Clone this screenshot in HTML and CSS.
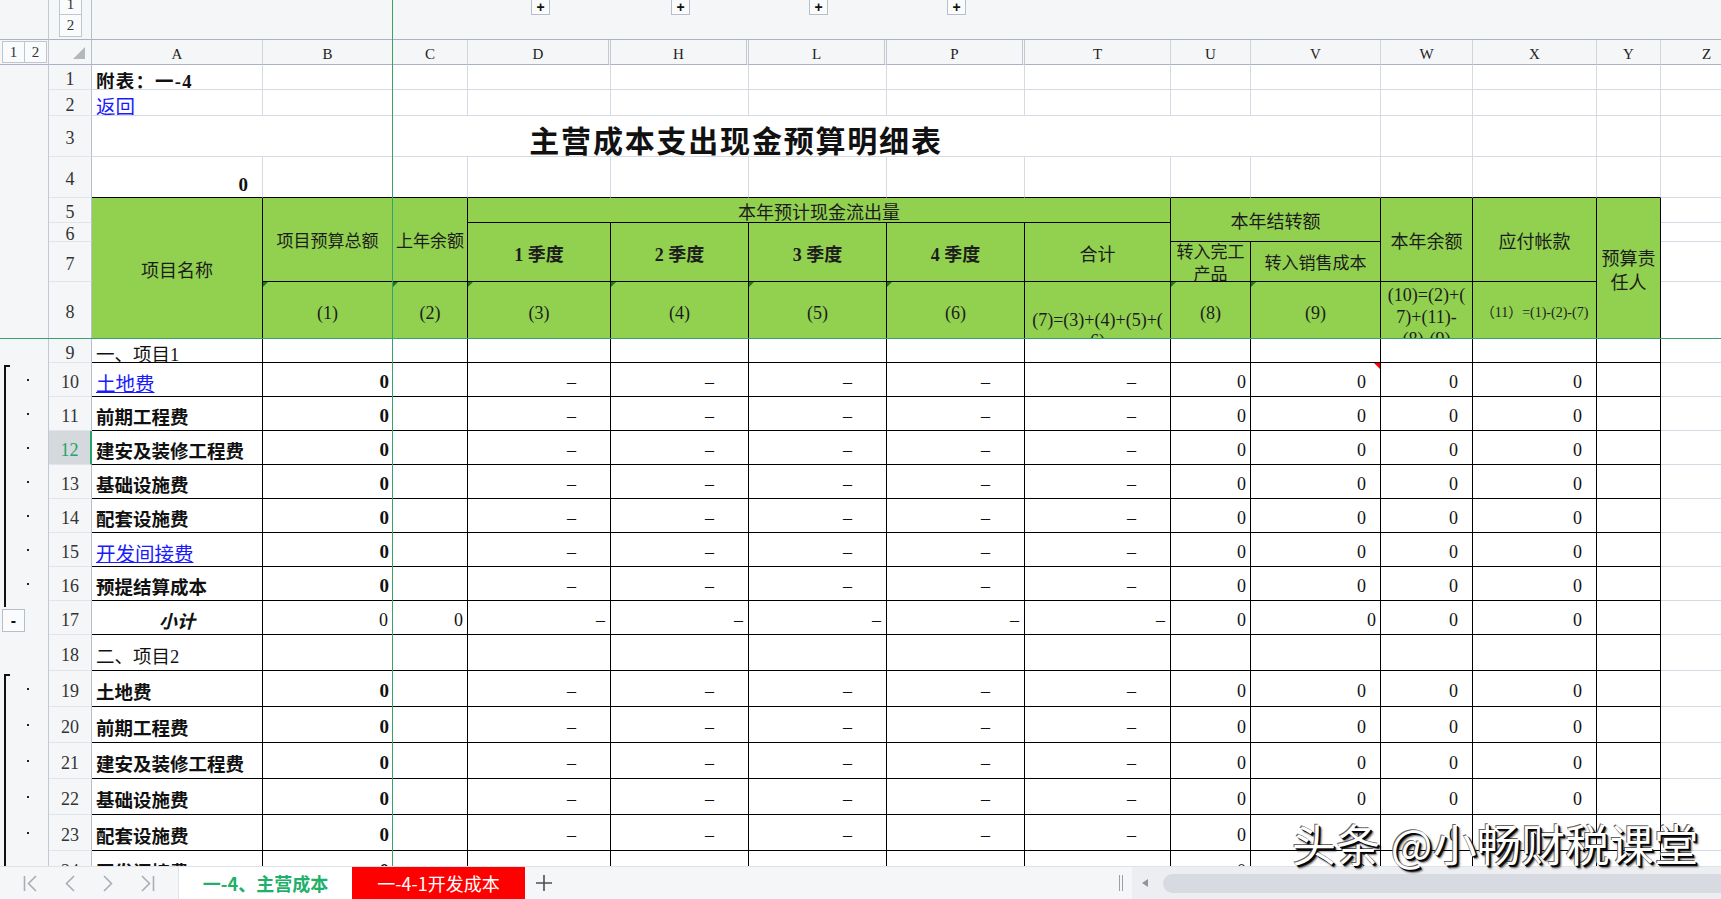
FILE: index.html
```html
<!DOCTYPE html>
<html lang="zh-CN">
<head>
<meta charset="utf-8">
<title>主营成本支出现金预算明细表</title>
<link rel="stylesheet" href="styles.css">
</head>
<body>
<div class="app">
  <div class="sheet">
    <div class="grid">
      <!-- outline bar -->
      <div class="o top"></div>
      <div class="topl"><span class="lb lb1">1</span><span class="lb lb2">2</span></div>
      <div class="topr"><span class="plus p1">+</span><span class="plus p2">+</span><span class="plus">+</span><span class="plus">+</span></div>
      <!-- column header -->
      <div class="o lv"><span class="lvl">1</span><span class="lvl lvl2">2</span></div>
      <div class="corner"><span class="tri"></span></div>
      <div class="ch">A</div><div class="ch">B</div><div class="ch">C</div><div class="ch hid">D</div><div class="ch hid">H</div><div class="ch hid">L</div><div class="ch hid">P</div><div class="ch">T</div><div class="ch">U</div><div class="ch">V</div><div class="ch">W</div><div class="ch">X</div><div class="ch">Y</div><div class="ch">Z</div>
      <!-- row 1 -->
      <div class="o"></div><div class="r">1</div>
      <div class="t ls">附表：一-4</div>
      <div></div><div></div><div></div><div></div><div></div><div></div><div></div><div></div><div></div><div></div><div></div><div></div><div></div>
      <!-- row 2 -->
      <div class="o"></div><div class="r">2</div>
      <div class="t tn"><a class="lk" href="#">返回</a></div>
      <div></div><div></div><div></div><div></div><div></div><div></div><div></div><div></div><div></div><div></div><div></div><div></div><div></div>
      <!-- row 3 -->
      <div class="o"></div><div class="r">3</div>
      <div class="title">主营成本支出现金预算明细表</div>
      <div></div><div></div><div></div><div></div>
      <!-- row 4 -->
      <div class="o"></div><div class="r">4</div>
      <div class="kb n b p14 bot">0</div>
      <div class="kb"></div><div class="kb"></div><div class="kb"></div><div class="kb"></div><div class="kb"></div><div class="kb"></div><div class="kb"></div><div class="kb"></div><div class="kb"></div><div class="kb"></div><div class="kb"></div><div class="kb"></div>
      <div></div>
      <!-- row 5 -->
      <div class="o"></div><div class="r">5</div>
      <div class="h s4r">项目名称</div>
      <div class="h s3r f17">项目预算总额</div>
      <div class="h s3r f17">上年余额</div>
      <div class="h s5c">本年预计现金流出量</div>
      <div class="h s2c s2r">本年结转额</div>
      <div class="h s3r">本年余额</div>
      <div class="h s3r">应付帐款</div>
      <div class="h s4r l24"><span>预算责<br>任人</span></div>
      <div></div>
      <!-- row 6 -->
      <div class="o"></div><div class="r">6</div>
      <div class="h s2r b">1 季度</div>
      <div class="h s2r b">2 季度</div>
      <div class="h s2r b">3 季度</div>
      <div class="h s2r b">4 季度</div>
      <div class="h s2r">合计</div>
      <div></div>
      <!-- row 7 -->
      <div class="o"></div><div class="r">7</div>
      <div class="h f17"><span>转入完工<br>产品</span></div>
      <div class="h f17">转入销售成本</div>
      <div></div>
      <!-- row 8 -->
      <div class="o"></div><div class="r">8</div>
      <div class="h tg">(1)</div>
      <div class="h tg">(2)</div>
      <div class="h tg">(3)</div>
      <div class="h tg">(4)</div>
      <div class="h tg">(5)</div>
      <div class="h tg">(6)</div>
      <div class="h t8"><span>(7)=(3)+(4)+(5)+(<br>6)</span></div>
      <div class="h tg">(8)</div>
      <div class="h tg">(9)</div>
      <div class="h w8"><span>(10)=(2)+(<br>7)+(11)-<br>(8)-(9)</span></div>
      <div class="h x8">（11）=(1)-(2)-(7)</div>
      <div></div>
      <!-- row 9 -->
      <div class="o"></div><div class="r">9</div>
      <div class="k t tn">一、项目1</div>
      <div class="k"></div><div class="k"></div><div class="k"></div><div class="k"></div><div class="k"></div><div class="k"></div><div class="k"></div><div class="k"></div><div class="k"></div><div class="k"></div><div class="k"></div><div class="k"></div>
      <div></div>
      <!-- row 10 -->
      <div class="og">
        <span class="bar"></span>
        <span class="dot"></span><span class="dot"></span><span class="dot"></span><span class="dot"></span><span class="dot"></span><span class="dot"></span><span class="dot"></span>
        <span class="mbtn">-</span>
      </div>
      <div class="r">10</div>
      <div class="k t"><a class="lk" href="#">土地费</a></div>
      <div class="k n nb">0</div><div class="k"></div>
      <div class="k d">–</div><div class="k d">–</div><div class="k d">–</div><div class="k d">–</div><div class="k d">–</div>
      <div class="k n">0</div><div class="k n p14 rt">0</div><div class="k n p14">0</div><div class="k n p14">0</div>
      <div class="k"></div><div></div>
      <!-- row 11 -->
      <div class="r">11</div>
      <div class="k t">前期工程费</div>
      <div class="k n nb">0</div><div class="k"></div>
      <div class="k d">–</div><div class="k d">–</div><div class="k d">–</div><div class="k d">–</div><div class="k d">–</div>
      <div class="k n">0</div><div class="k n p14">0</div><div class="k n p14">0</div><div class="k n p14">0</div>
      <div class="k"></div><div></div>
      <!-- row 12 -->
      <div class="r sel">12</div>
      <div class="k t">建安及装修工程费</div>
      <div class="k n nb">0</div><div class="k"></div>
      <div class="k d">–</div><div class="k d">–</div><div class="k d">–</div><div class="k d">–</div><div class="k d">–</div>
      <div class="k n">0</div><div class="k n p14">0</div><div class="k n p14">0</div><div class="k n p14">0</div>
      <div class="k"></div><div></div>
      <!-- row 13 -->
      <div class="r">13</div>
      <div class="k t">基础设施费</div>
      <div class="k n nb">0</div><div class="k"></div>
      <div class="k d">–</div><div class="k d">–</div><div class="k d">–</div><div class="k d">–</div><div class="k d">–</div>
      <div class="k n">0</div><div class="k n p14">0</div><div class="k n p14">0</div><div class="k n p14">0</div>
      <div class="k"></div><div></div>
      <!-- row 14 -->
      <div class="r">14</div>
      <div class="k t">配套设施费</div>
      <div class="k n nb">0</div><div class="k"></div>
      <div class="k d">–</div><div class="k d">–</div><div class="k d">–</div><div class="k d">–</div><div class="k d">–</div>
      <div class="k n">0</div><div class="k n p14">0</div><div class="k n p14">0</div><div class="k n p14">0</div>
      <div class="k"></div><div></div>
      <!-- row 15 -->
      <div class="r">15</div>
      <div class="k t"><a class="lk" href="#">开发间接费</a></div>
      <div class="k n nb">0</div><div class="k"></div>
      <div class="k d">–</div><div class="k d">–</div><div class="k d">–</div><div class="k d">–</div><div class="k d">–</div>
      <div class="k n">0</div><div class="k n p14">0</div><div class="k n p14">0</div><div class="k n p14">0</div>
      <div class="k"></div><div></div>
      <!-- row 16 -->
      <div class="r">16</div>
      <div class="k t">预提结算成本</div>
      <div class="k n nb">0</div><div class="k"></div>
      <div class="k d">–</div><div class="k d">–</div><div class="k d">–</div><div class="k d">–</div><div class="k d">–</div>
      <div class="k n">0</div><div class="k n p14">0</div><div class="k n p14">0</div><div class="k n p14">0</div>
      <div class="k"></div><div></div>
      <!-- row 17 -->
      <div class="r">17</div>
      <div class="k sub">小计</div>
      <div class="k n">0</div><div class="k n">0</div>
      <div class="k d0">–</div><div class="k d0">–</div><div class="k d0">–</div><div class="k d0">–</div><div class="k d0">–</div>
      <div class="k n">0</div><div class="k n">0</div><div class="k n p14">0</div><div class="k n p14">0</div>
      <div class="k"></div><div></div>
      <!-- row 18 -->
      <div class="o"></div><div class="r">18</div>
      <div class="k t tn">二、项目2</div>
      <div class="k"></div><div class="k"></div><div class="k"></div><div class="k"></div><div class="k"></div><div class="k"></div><div class="k"></div><div class="k"></div><div class="k"></div><div class="k"></div><div class="k"></div><div class="k"></div>
      <div></div>
      <!-- row 19 -->
      <div class="og og2">
        <span class="bar"></span>
        <span class="dot"></span><span class="dot"></span><span class="dot"></span><span class="dot"></span><span class="dot"></span><span class="dot"></span>
      </div>
      <div class="r">19</div>
      <div class="k t">土地费</div>
      <div class="k n nb">0</div><div class="k"></div>
      <div class="k d">–</div><div class="k d">–</div><div class="k d">–</div><div class="k d">–</div><div class="k d">–</div>
      <div class="k n">0</div><div class="k n p14">0</div><div class="k n p14">0</div><div class="k n p14">0</div>
      <div class="k"></div><div></div>
      <!-- row 20 -->
      <div class="r">20</div>
      <div class="k t">前期工程费</div>
      <div class="k n nb">0</div><div class="k"></div>
      <div class="k d">–</div><div class="k d">–</div><div class="k d">–</div><div class="k d">–</div><div class="k d">–</div>
      <div class="k n">0</div><div class="k n p14">0</div><div class="k n p14">0</div><div class="k n p14">0</div>
      <div class="k"></div><div></div>
      <!-- row 21 -->
      <div class="r">21</div>
      <div class="k t">建安及装修工程费</div>
      <div class="k n nb">0</div><div class="k"></div>
      <div class="k d">–</div><div class="k d">–</div><div class="k d">–</div><div class="k d">–</div><div class="k d">–</div>
      <div class="k n">0</div><div class="k n p14">0</div><div class="k n p14">0</div><div class="k n p14">0</div>
      <div class="k"></div><div></div>
      <!-- row 22 -->
      <div class="r">22</div>
      <div class="k t">基础设施费</div>
      <div class="k n nb">0</div><div class="k"></div>
      <div class="k d">–</div><div class="k d">–</div><div class="k d">–</div><div class="k d">–</div><div class="k d">–</div>
      <div class="k n">0</div><div class="k n p14">0</div><div class="k n p14">0</div><div class="k n p14">0</div>
      <div class="k"></div><div></div>
      <!-- row 23 -->
      <div class="r">23</div>
      <div class="k t">配套设施费</div>
      <div class="k n nb">0</div><div class="k"></div>
      <div class="k d">–</div><div class="k d">–</div><div class="k d">–</div><div class="k d">–</div><div class="k d">–</div>
      <div class="k n">0</div><div class="k n p14">0</div><div class="k n p14">0</div><div class="k n p14">0</div>
      <div class="k"></div><div></div>
      <!-- row 24 -->
      <div class="r">24</div>
      <div class="k t">开发间接费</div>
      <div class="k n nb">0</div><div class="k"></div>
      <div class="k d">–</div><div class="k d">–</div><div class="k d">–</div><div class="k d">–</div><div class="k d">–</div>
      <div class="k n">0</div><div class="k n p14">0</div><div class="k n p14">0</div><div class="k n p14">0</div>
      <div class="k"></div><div></div>
    </div>
    <div class="freeze-v"></div>
    <div class="freeze-h"></div>
  </div>
  <div class="tabs">
    <div class="nav">
      <span class="navi"><svg width="15" height="17" viewBox="0 0 15 17"><path d="M1.5 1v15M13 1L5.5 8.5 13 16" fill="none" stroke="#a9adb4" stroke-width="1.6"/></svg></span>
      <span class="navi"><svg width="11" height="17" viewBox="0 0 11 17"><path d="M10 1L2.5 8.5 10 16" fill="none" stroke="#a9adb4" stroke-width="1.6"/></svg></span>
      <span class="navi"><svg width="11" height="17" viewBox="0 0 11 17"><path d="M1 1L8.5 8.5 1 16" fill="none" stroke="#a9adb4" stroke-width="1.6"/></svg></span>
      <span class="navi"><svg width="15" height="17" viewBox="0 0 15 17"><path d="M2 1L9.5 8.5 2 16M13.5 1v15" fill="none" stroke="#a9adb4" stroke-width="1.6"/></svg></span>
    </div>
    <div class="tab on">一-4、主营成本</div>
    <div class="tab red">一-4-1开发成本</div>
    <div class="add"><svg width="18" height="18" viewBox="0 0 18 18"><path d="M9 1v16M1 9h16" fill="none" stroke="#4a4f57" stroke-width="1.6"/></svg></div>
    <div class="fill"></div>
    <div class="split"><span></span><span></span></div>
    <div class="track"><span class="arr"></span><span class="thumb"></span></div>
  </div>
  <div class="wm">头条 @小畅财税课堂</div>
</div>
</body>
</html>
```

FILE: styles.css
```css
*{box-sizing:border-box;margin:0;padding:0}
html,body{width:1721px;height:899px;overflow:hidden}
body{background:#fff;font-family:"Liberation Serif","Noto Sans CJK SC",serif;color:#111}
.app{position:relative;display:flex;flex-direction:column;height:899px;width:1721px;overflow:hidden}
.sheet{position:relative;flex:0 0 866px;overflow:hidden}
.grid{display:grid;grid-template-columns:49px 43px 171px 130px 75px 143px 138px 138px 138px 146px 80px 130px 92px 124px 64px 92px;grid-template-rows:40px 25px 25px 26px 41px 41px 25px 19px 40px 57px 24px repeat(8,34px) repeat(6,36px) 36px;width:1753px}
.grid>div{display:flex;align-items:center;min-width:0;overflow:hidden;white-space:nowrap;background:#fff;border-right:1px solid #d4d9e2;border-bottom:1px solid #d4d9e2;font-size:18px;padding-top:5px}

/* outline column + bars */
.grid>.o{background:#f5f6f8;border-right-color:#c3c9d4;border-bottom:0;padding-top:0}
.grid>.top{border-bottom:1px solid #aab2c4}
.grid>.topl{background:#f5f6f8;border-right-color:#b8bfcc;border-bottom-color:#aab2c4;flex-direction:column;align-items:flex-start;padding:0 0 0 10px}
.lb{display:flex;justify-content:center;width:23px;border:1px solid #c0c6d0;background:#fafbfc;font-size:15px;color:#333;line-height:1}
.lb1{height:15px;border-top:0;align-items:flex-end;padding-bottom:2px}
.lb2{height:22px;border-top:0;align-items:center}
.grid>.topr{grid-column:3 / -1;background:#f5f6f8;border-right:0;border-bottom-color:#aab2c4;align-items:flex-start;padding-top:0}
.plus{display:flex;align-items:center;justify-content:center;width:19px;height:15px;border:1px solid #b9bfca;border-top:0;background:#fafbfc;font:bold 14px "Liberation Sans",sans-serif;line-height:1;color:#111;margin-left:119px}
.p1{margin-left:439px}
.p2{margin-left:121px}

/* column header */
.grid>.lv{border-bottom:1px solid #aab2c4;align-items:flex-start;padding:1px 0 0 2px}
.lvl{display:flex;align-items:center;justify-content:center;width:23px;height:22px;border:1px solid #c0c6d0;background:#fafbfc;font-size:15px;color:#333}
.lvl2{width:22px;border-left:0}
.grid>.corner{background:#f5f6f8;border-right-color:#b8bfcc;border-bottom-color:#aab2c4;align-items:flex-end;justify-content:flex-end;padding:0 6px 5px 0}
.tri{width:0;height:0;border-left:12px solid transparent;border-bottom:12px solid #b4b7bc}
.grid>.ch{background:#f5f6f8;justify-content:center;font-size:15px;color:#222;border-right-color:#cfd4dd;border-bottom-color:#aab2c4}
.grid>.hid{border-right:3px double #c3c8d2}

/* row header */
.grid>.r{background:#f5f6f8;justify-content:center;color:#333;border-right-color:#b8bfcc;border-bottom-color:#e1e4ea;font-size:18px}
.grid>.r.sel{background:#d5d8dd;color:#22a567;border-right:2px solid #22a567}

/* borders */
.grid>.k{border-right-color:#000;border-bottom-color:#000}
.grid>.kb{border-bottom-color:#000}

/* header cells */
.grid>.h{position:relative;background:#92d050;border-right-color:#000;border-bottom-color:#000;justify-content:center;text-align:center;white-space:normal;color:#1c1c1c;line-height:22px}
.s4r{grid-row:span 4}
.s3r{grid-row:span 3}
.s2r{grid-row:span 2}
.s2c{grid-column:span 2}
.s5c{grid-column:span 5}
.grid>.f17{font-size:17px}
.grid>.l24{line-height:24px}
.b{font-weight:bold}
.grid>.t8{align-items:flex-start;padding-top:28px;line-height:21px}
.grid>.w8{align-items:flex-start;padding-top:2px;line-height:22px}
.grid>.x8{font-size:14px}
.tg::before{content:"";position:absolute;left:0;top:0;border-top:5px solid #1f7a1f;border-right:5px solid transparent}
.rt{position:relative}
.rt::after{content:"";position:absolute;right:0;top:0;border-top:6px solid #f00;border-left:6px solid transparent}

/* data cells */
.grid>.t{padding-left:4px;font-weight:bold;font-size:18.5px}
.grid>.ls{letter-spacing:1.2px}
.grid>.tn{font-weight:normal}
.lk{color:#1a1aff;text-decoration:underline;font-weight:normal;font-size:19.5px}
.grid>.n{justify-content:flex-end;padding-right:4px}
.grid>.nb{font-weight:bold;font-size:19px;padding-right:3px}
.grid>.p14{padding-right:14px}
.grid>.bot{align-items:flex-end;padding-bottom:1px;font-size:19px}
.grid>.d{justify-content:flex-end;padding-right:34px}
.grid>.d0{justify-content:flex-end;padding-right:5px}
.grid>.sub{justify-content:center;font-style:italic;font-weight:bold}
.grid>.title{grid-column:span 10;justify-content:center;font-size:30px;font-weight:bold;letter-spacing:1.8px}

/* outline groups */
.grid>.og{grid-row:span 8;display:grid;grid-template-columns:25px 23px;grid-template-rows:repeat(8,34px);align-items:center;background:#f5f6f8;border-right-color:#c3c9d4;border-bottom:0;padding:0}
.grid>.og2{grid-row:span 6;grid-template-rows:repeat(6,36px)}
.bar{grid-column:1;grid-row:1 / span 7;align-self:stretch;margin:2px 0 -6px 4px;width:6px;border-left:2px solid #111;border-top:2px solid #111}
.og2 .bar{grid-row:1 / span 6;margin:3px 0 0 4px}
.dot{grid-column:2;width:2px;height:2px;background:#222;margin-left:2px}
.mbtn{grid-column:1;grid-row:8;align-self:start;margin:8px 0 0 2px;width:23px;height:23px;border:1px solid #b8bec9;background:#fafbfc;display:flex;align-items:center;justify-content:center;font:bold 16px "Liberation Sans",sans-serif;color:#111}

/* freeze panes */
.freeze-v{position:absolute;left:392px;top:0;width:1px;height:100%;background:#35a36e}
.freeze-h{position:absolute;left:0;top:338px;width:100%;height:1px;background:#35a36e}

/* sheet tabs */
.tabs{flex:0 0 33px;display:flex;align-items:stretch;background:#f5f6f8;border-top:1px solid #dfe2e7;font-family:"Noto Sans CJK SC",sans-serif}
.nav{width:178px;display:flex;align-items:center;padding-left:11px}
.navi{width:39px;display:flex;justify-content:center;align-items:center}
.tab{display:flex;align-items:center;justify-content:center;font-size:18px}
.tab.on{width:174px;background:#fff;color:#1fb06b;font-weight:bold;border-left:1px solid #e0e3e8}
.tab.red{width:173px;background:#ff0000;color:#fff}
.add{width:37px;display:flex;align-items:center;justify-content:center}
.fill{flex:1}
.split{width:17px;display:flex;align-items:center;padding-left:4px;gap:2px}
.split span{width:1px;height:16px;background:#9aa0aa}
.track{width:589px;flex:none;background:#eceef2;display:flex;align-items:center;padding-left:10px}
.arr{width:0;height:0;border-right:6px solid #8e949d;border-top:4px solid transparent;border-bottom:4px solid transparent;margin-right:15px}
.thumb{flex:1;height:19px;border-radius:10px 0 0 10px;background:#d7dae1}

/* watermark */
.wm{position:absolute;left:1292px;top:821px;font-family:"Noto Sans CJK SC",sans-serif;font-size:44px;line-height:1;letter-spacing:0.3px;color:#fff;white-space:nowrap;text-shadow:1px 1px 0 #000,2px 2px 0 #111,3px 3px 2px rgba(0,0,0,.6),-1px -1px 0 #666}
```
